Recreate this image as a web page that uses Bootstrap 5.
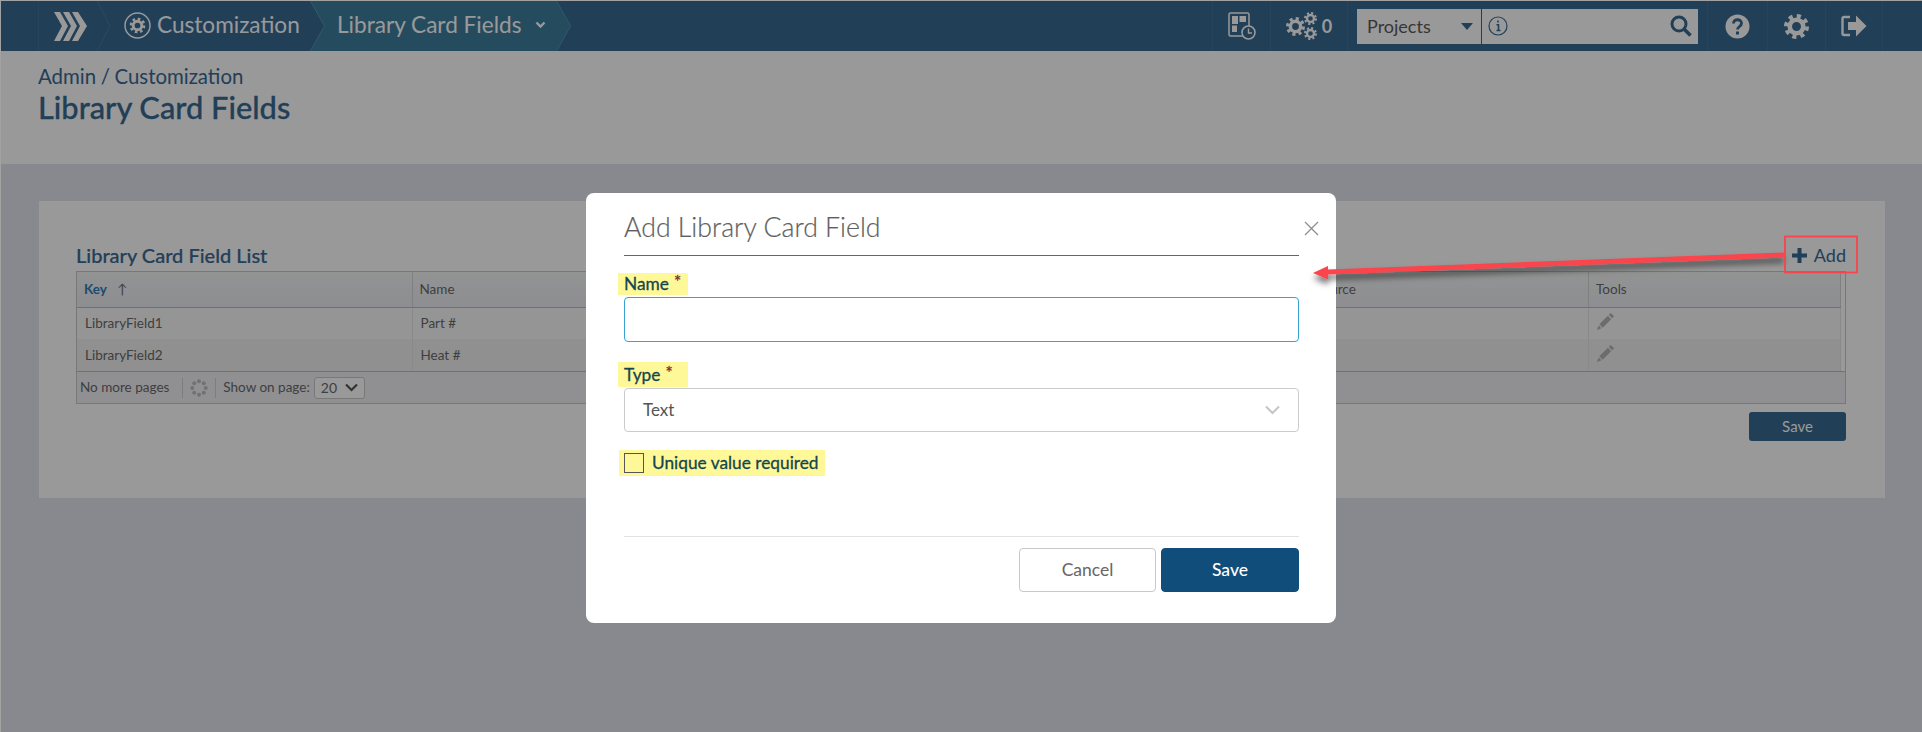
<!DOCTYPE html>
<html lang="en">
<head>
<meta charset="utf-8">
<title>Library Card Fields</title>
<link href="https://cdn.jsdelivr.net/npm/bootstrap@5.3.0/dist/css/bootstrap.min.css" rel="stylesheet">
<style>
html,body{margin:0;height:732px;overflow:hidden}
body{font-family:Lato,"Liberation Sans",sans-serif;background:#e1e5ef;color:#6a6a6a}
.app-frame{position:relative;height:732px;overflow:hidden;border-top:1px solid #a2a2a2;border-left:1px solid #a2a2a2}
.top-nav{height:50px;background:#396993;color:#fff}
.nav-lead{width:38px;border-right:1px solid #42719b;height:100%}
.logo-cell{width:58px;height:100%;padding-left:15px}
.crumb-tip{width:14px;height:50px;flex:none}
.crumb-plain{width:199px;height:100%;padding:0 0 2px 13px;font-size:22.6px;gap:6px}
.crumb-active{position:relative;width:261px;height:100%;font-size:22.6px;padding:0 0 2px 27px;background:#3f7d9d;clip-path:polygon(0 0,247px 0,261px 50%,247px 100%,0 100%,14px 50%)}
.crumb-line{position:absolute;left:0;top:0;width:261px;height:50px}
.crumb-caret{margin-left:14px}
.nav-right{padding-right:39px}
.nav-cell{height:100%;border-left:1px solid #42719b}
.cell-a{width:58px}.cell-b{width:77px;gap:5px;font-size:18px;font-weight:700}
.cell-search{width:360px;padding-left:9px}
.cell-help{width:60px}.cell-gear{width:58px}.cell-exit{width:58px;border-right:1px solid #42719b}
.search-wrap{height:35px;width:341px;background:#fff;color:#5a5a5a}
.proj-box{width:125px;height:100%;padding-left:10px;font-size:18px;border-right:1px solid #396993}
.proj-caret{width:0;height:0;border-left:6px solid transparent;border-right:6px solid transparent;border-top:7px solid #396993;margin-right:8px}
.search-field{height:100%;padding:0 6px}
.title-band{height:113px;background:#fff;padding:12px 0 0 37px;color:#396993}
.crumb-text{font-size:20.4px;line-height:27px;word-spacing:-.6px}
.band-title{font-size:30.8px;line-height:36px;font-weight:500;margin:0;-webkit-text-stroke:.3px #396993}
.list-panel{margin:37px 37px 0 38px;height:297px;background:#fff;padding:42px 39px 0 37px}
.panel-head{height:28px}
.panel-title{font-size:20px;line-height:24px;color:#396993;margin:0 0 4px;-webkit-text-stroke:.2px #396993}
.add-link{font-size:18px;color:#396993;gap:7px;line-height:24px;text-decoration:none;margin-bottom:4px}
.grid-box{border:1px solid #c9c9c9;background:#fff;font-size:13.5px}
.grid-table{width:calc(100% - 4px);table-layout:fixed;border-collapse:collapse;margin:0}
.grid-table th{height:35px;font-weight:400;background:linear-gradient(#f4f5f6,#ecedf2);padding:0 7px;border-right:1px solid #d6d6d6;border-bottom:1px solid #bcbcbc;color:#6a6a6a}
.grid-table td{height:32px;padding:0 8px;border-right:1px solid #e4e4e4}
.grid-table tr.odd-row td{background:#f9f9f9}
.grid-table tr.even-row td{background:#f0f0f0}
.row-pencil{display:block;margin:-4px 0 0 -1px}
.sort-key{color:#2f7db8;font-weight:700;margin-right:10px}
.grid-foot{height:32px;border-top:1px solid #bcbcbc;padding-left:3px;background:#f0f1f4;gap:7px}
.foot-first{margin-right:6px}
.foot-sep{width:1px;height:20px;background:#d0d0d0}
.foot-select{width:51px;height:22px;border:1px solid #c8c8c8;border-radius:3px;background:#fff;padding:0 6px;font-size:14px;margin-left:-3px}
.panel-actions{margin-top:8px}
.panel-save{width:97px;height:29px;background:#396993;color:#fff;border:0;border-radius:3px;font-size:15px;padding:0}
.dim-layer{position:absolute;inset:0;background:#000;opacity:.4;z-index:1050}
.modal.dialog-layer{position:absolute;display:block;inset:0;overflow:hidden;z-index:1055}
.dialog-box{width:750px;max-width:none;margin:192px 0 0 585px}
.dialog-card{height:430px;border:0;border-radius:8px;padding:0 37px 0 38px;color:#5e5e5e}
.dialog-head{height:63px;border-bottom:1px solid #666;position:relative}
.dialog-title{font-size:26.7px;line-height:34px;margin:0;color:#5f5f5f;padding-top:17px;font-weight:300;-webkit-text-stroke:.2px #5f5f5f}
.dialog-close{position:absolute;right:-20px;top:28px;background:none;border:0;padding:0;line-height:0}
.mark-label{display:inline-block;background:#fff899;color:#14464e;font-size:17.3px;font-weight:400;margin-left:-6px;padding:0 0 0 6px;width:70px;height:22px;-webkit-text-stroke:.3px #14464e;white-space:nowrap}
.mark-star{color:#f00;font-size:17px;vertical-align:2px;margin-left:5px;line-height:1}
.name-mark{margin-top:17px;display:block;line-height:19px}
.type-mark{margin-top:20px;display:block;height:25px;line-height:25px}
.name-input{display:block;width:100%;height:45px;margin-top:2px;border:1px solid #36a3d3;border-radius:4px;box-shadow:none}
.type-select{height:44px;margin-top:1px;border:1px solid #cbcbcb;border-radius:4px;padding:0 18px;font-size:17px;color:#555}
.check-mark{margin:18px 0 0 -5px;width:206px;height:26px;background:#fff899;padding-left:5px;gap:8px;color:#14464e;font-size:17.3px;font-weight:400;-webkit-text-stroke:.3px #14464e}
.check-box{width:20px;height:20px;border:1px solid #555;flex:none}
.dialog-foot{margin-top:60px;border-top:1px solid #e2e2e2;padding-top:11px;gap:5px}
.btn-cancel{width:137px;height:44px;background:#fff;border:1px solid #c9c9c9;color:#666;font-size:17.5px;border-radius:4px;padding:0}
.btn-save{width:138px;height:44px;background:#114d7a;border:1px solid #114d7a;color:#fff;font-size:17.5px;font-weight:500;border-radius:4px;padding:0}
.annot-layer{position:absolute;left:-1px;top:-1px;width:1922px;height:732px;z-index:1060;pointer-events:none}
</style>
</head>
<body>
<svg width="0" height="0" class="d-block" aria-hidden="true">
  <defs>
    <symbol id="cog" viewBox="0 0 24 24">
      <circle cx="12" cy="12" r="6.500" fill="none" stroke="currentColor" stroke-width="4.400"/>
      <circle cx="12" cy="12" r="10" fill="none" stroke="currentColor" stroke-width="4" stroke-dasharray="3.900 3.950"/>
    </symbol>
    <symbol id="pencil" viewBox="0 0 20 20">
      <path fill="currentColor" d="M15.500 1l3.500 3.500-2 2L13.500 3zM12.500 4l3.500 3.500-9 9L3.500 13zM2.800 14.200l3 3L1 19z"/>
    </symbol>
  </defs>
</svg>
<div class="app-frame">
  <nav class="top-nav d-flex align-items-center">
    <div class="nav-lead"></div>
    <div class="logo-cell d-flex align-items-center">
      <svg width="33" height="29" viewBox="0 0 33 29"><g fill="#fff"><path d="M0 0h6l8 14-8 15H0l8-15z"/><path d="M9 0h6l8 14-8 15H9l8-15z"/><path d="M18 0h6l9 14-9 15h-6l8-15z"/></g></svg>
    </div>
    <svg class="crumb-tip" viewBox="0 0 14 50"><path d="M0 0l13 25L0 50" fill="none" stroke="#4a7aa3"/></svg>
    <div class="crumb-plain d-flex align-items-center">
      <svg width="27" height="27" viewBox="0 0 27 27"><circle cx="13.500" cy="13.500" r="12.500" fill="none" stroke="#fff" stroke-width="1.500"/><use href="#cog" x="5.500" y="5.500" width="16" height="16" color="#fff"/></svg>
      <span>Customization</span>
    </div>
    <div class="crumb-active d-flex align-items-center">
      <svg class="crumb-line" viewBox="0 0 261 50"><path d="M0 0l14 25L0 50M247 0l14 25-14 25" fill="none" stroke="#5a93b0" stroke-width="1.500"/></svg>
      <span>Library Card Fields</span>
      <svg class="crumb-caret" width="11" height="8" viewBox="0 0 11 8"><path d="M1.500 1.500l4 4 4-4" fill="none" stroke="#fff" stroke-width="2.400"/></svg>
    </div>
    <div class="nav-right ms-auto d-flex align-items-center h-100">
      <div class="nav-cell cell-a d-flex align-items-center justify-content-center">
        <svg width="28" height="28" viewBox="0 0 28 28"><rect x="1" y="1" width="20" height="23" rx="1.500" fill="none" stroke="#fff" stroke-width="1.500"/><path fill="#fff" d="M4 4h6v8H4zM11.500 4H18v6h-6.500zM4 13.500h5V20H4z"/><circle cx="20.500" cy="20.500" r="6.500" fill="#396993" stroke="#fff" stroke-width="1.600"/><path d="M20.500 16.500v4.500h3.500" fill="none" stroke="#fff" stroke-width="1.400"/></svg>
      </div>
      <div class="nav-cell cell-b d-flex align-items-center justify-content-center">
        <svg width="31" height="28" viewBox="0 0 31 28"><use href="#cog" x="0" y="5" width="19" height="19" color="#fff"/><use href="#cog" x="18" y="0" width="13" height="13" color="#fff"/><use href="#cog" x="18" y="15" width="13" height="13" color="#fff"/></svg>
        <span>0</span>
      </div>
      <div class="nav-cell cell-search d-flex align-items-center">
        <div class="search-wrap d-flex">
          <div class="proj-box d-flex align-items-center justify-content-between"><span>Projects</span><span class="proj-caret"></span></div>
          <div class="search-field flex-grow-1 d-flex align-items-center justify-content-between">
            <svg width="20" height="20" viewBox="0 0 20 20"><circle cx="10" cy="10" r="9" fill="none" stroke="#396993" stroke-width="1.200"/><path d="M10 4.500v2M8.500 8.800H10.500V14M8.500 14.500h4" fill="none" stroke="#396993" stroke-width="1.600"/></svg>
            <svg width="22" height="22" viewBox="0 0 22 22"><circle cx="9" cy="9" r="7" fill="none" stroke="#396993" stroke-width="3"/><path d="M14 14l6.500 6.500" stroke="#396993" stroke-width="3.500"/></svg>
          </div>
        </div>
      </div>
      <div class="nav-cell cell-help d-flex align-items-center justify-content-center">
        <svg width="25" height="25" viewBox="0 0 25 25"><circle cx="12.500" cy="12.500" r="12" fill="#fff"/><path d="M8.500 9.500c0-5 8-5 8 0 0 3-4 3-4 6" fill="none" stroke="#396993" stroke-width="2.800"/><rect x="11" y="17.500" width="3" height="3" fill="#396993"/></svg>
      </div>
      <div class="nav-cell cell-gear d-flex align-items-center justify-content-center">
        <svg width="25" height="25" color="#fff"><use href="#cog"/></svg>
      </div>
      <div class="nav-cell cell-exit d-flex align-items-center justify-content-center">
        <svg width="26" height="24" viewBox="0 0 26 24"><path d="M9 3H3a1.500 1.500 0 0 0-1.500 1.500v15A1.500 1.500 0 0 0 3 21h6" fill="none" stroke="#fff" stroke-width="2.400"/><path fill="#fff" d="M7 8h8V1.500L25.500 12 15 22.500V16H7z"/></svg>
      </div>
    </div>
  </nav>
  <header class="title-band">
    <div class="crumb-text">Admin / Customization</div>
    <h1 class="band-title">Library Card Fields</h1>
  </header>
  <section class="list-panel">
    <div class="panel-head d-flex align-items-end justify-content-between">
      <h2 class="panel-title">Library Card Field List</h2>
      <a class="add-link d-flex align-items-center" href="#">
        <svg width="15" height="15" viewBox="0 0 15 15"><path fill="#396993" d="M5.500 0h4v5.500H15v4H9.500V15h-4V9.500H0v-4h5.500z"/></svg>
        <span>Add</span>
      </a>
    </div>
    <div class="grid-box">
      <table class="grid-table">
        <colgroup><col style="width:335px"><col style="width:335px"><col style="width:265px"><col style="width:264px"><col style="width:auto"><col style="width:252px"></colgroup>
        <thead><tr><th><span class="sort-key">Key</span>↑</th><th>Name</th><th>Type</th><th>Unique</th><th>Data Source</th><th>Tools</th></tr></thead>
        <tbody>
          <tr class="odd-row"><td>LibraryField1</td><td>Part #</td><td></td><td></td><td></td><td><svg class="row-pencil" width="19" height="19" color="#b4b4b4"><use href="#pencil"/></svg></td></tr>
          <tr class="even-row"><td>LibraryField2</td><td>Heat #</td><td></td><td></td><td></td><td><svg class="row-pencil" width="19" height="19" color="#b4b4b4"><use href="#pencil"/></svg></td></tr>
        </tbody>
      </table>
      <div class="grid-foot d-flex align-items-center">
        <span class="foot-first">No more pages</span><span class="foot-sep"></span>
        <svg width="18" height="18" viewBox="0 0 20 20"><g fill="#bdbdbd"><circle cx="10" cy="2.500" r="2.200"/><circle cx="15.300" cy="4.700" r="2.200"/><circle cx="17.500" cy="10" r="2.200"/><circle cx="15.300" cy="15.300" r="2.200"/><circle cx="10" cy="17.500" r="2.200"/><circle cx="4.700" cy="15.300" r="2.200"/><circle cx="2.500" cy="10" r="2.200"/><circle cx="4.700" cy="4.700" r="2.200"/></g></svg>
        <span class="foot-sep"></span><span>Show on page:</span>
        <div class="foot-select d-flex align-items-center justify-content-between"><span>20</span><svg width="13" height="9" viewBox="0 0 13 9"><path d="M1 1.500l5.500 5.500L12 1.500" fill="none" stroke="#555" stroke-width="2.200"/></svg></div>
      </div>
    </div>
    <div class="panel-actions d-flex justify-content-end"><button class="panel-save" type="button">Save</button></div>
  </section>

  <div class="dim-layer"></div>

  <div class="modal dialog-layer">
    <div class="modal-dialog dialog-box">
      <div class="modal-content dialog-card">
        <div class="dialog-head">
          <h5 class="dialog-title">Add Library Card Field</h5>
          <button class="dialog-close" type="button" aria-label="Close"><svg width="15" height="15" viewBox="0 0 15 15"><path d="M1 1l13 13M14 1L1 14" stroke="#8e8e8e" stroke-width="1.300"/></svg></button>
        </div>
        <label class="mark-label name-mark">Name<span class="mark-star">*</span></label>
        <input class="name-input form-control" type="text">
        <label class="mark-label type-mark">Type<span class="mark-star">*</span></label>
        <div class="type-select d-flex align-items-center justify-content-between"><span>Text</span><svg width="15" height="10" viewBox="0 0 15 10"><path d="M1 1.500l6.500 6.500L14 1.500" fill="none" stroke="#c4c4c4" stroke-width="2"/></svg></div>
        <div class="check-mark d-flex align-items-center"><span class="check-box"></span><span>Unique value required</span></div>
        <div class="dialog-foot d-flex justify-content-end">
          <button class="btn btn-cancel" type="button">Cancel</button>
          <button class="btn btn-save" type="button">Save</button>
        </div>
      </div>
    </div>
  </div>

  <svg class="annot-layer" viewBox="0 0 1922 732">
    <defs><filter id="sh" x="-5%" y="-100%" width="110%" height="300%"><feDropShadow dx="0" dy="5" stdDeviation="3" flood-color="#000" flood-opacity=".55"/></filter></defs>
    <path filter="url(#sh)" fill="#f9444b" d="M1313 273l15-7v3.500l456-17v5l-456 17v5z"/>
    <rect x="1785" y="236.500" width="72" height="36" fill="none" stroke="#f9444b" stroke-width="1.800"/>
  </svg>
</div>
</body>
</html>
